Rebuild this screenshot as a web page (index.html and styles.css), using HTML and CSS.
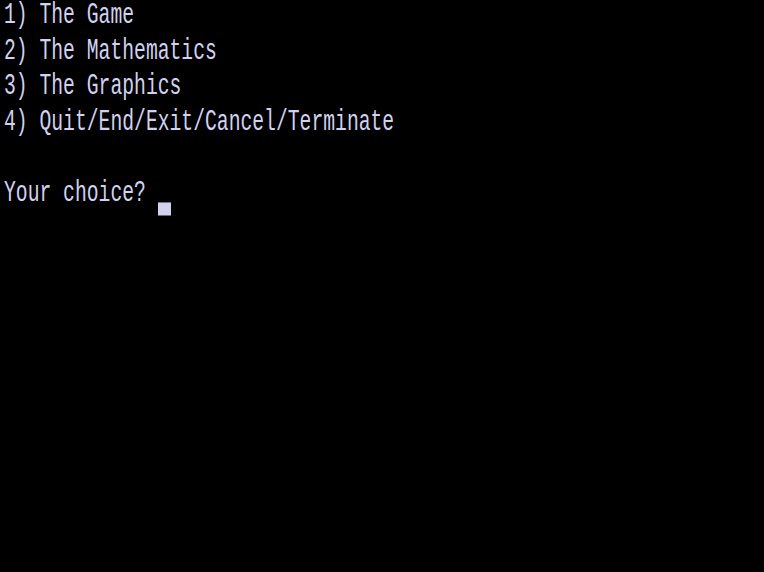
FILE: index.html
```html
<!DOCTYPE html>
<html>
<head>
<meta charset="utf-8">
<link rel="stylesheet" href="styles.css">
</head>
<body>
<div class="screen">
  <div class="line">1) The Game</div>
  <div class="line">2) The Mathematics</div>
  <div class="line">3) The Graphics</div>
  <div class="line">4) Quit/End/Exit/Cancel/Terminate</div>
  <div class="line"> </div>
  <div class="line">Your choice? <span class="cursor"></span></div>
</div>
</body>
</html>
```
FILE: styles.css
```css
html, body {
  margin: 0;
  padding: 0;
  background: #000;
  width: 764px;
  height: 572px;
  overflow: hidden;
}
.screen {
  font-family: "Liberation Mono", monospace;
  font-size: 19.72px;
  line-height: 24.55px;
  color: #d2d2f0;
  transform: scaleY(1.45);
  transform-origin: 0 0;
  margin-top: -2.4px;
  padding-left: 4px;
}
.line {
  height: 24.55px;
  white-space: pre;
}
.cursor {
  display: inline-block;
  width: 13px;
  height: 9px;
  background: #d2d2f0;
  vertical-align: -10.4px;
}
```
